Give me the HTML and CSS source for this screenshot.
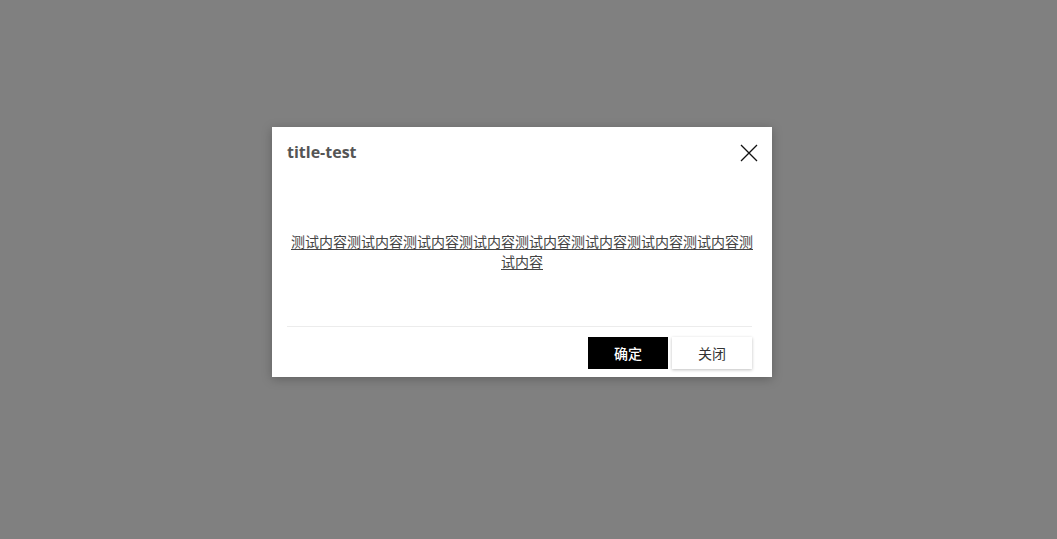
FILE: index.html
```html
<!DOCTYPE html>
<html lang="zh">
<head>
<meta charset="utf-8">
<link rel="stylesheet" href="styles.css">
</head>
<body>
<div class="overlay">
  <div class="dialog">
    <div class="dialog-header">
      <span class="dialog-title">title-test</span>
      <button class="close-btn" aria-label="close">
        <svg width="18" height="18" viewBox="0 0 18 18"><path d="M1 1L17 17M17 1L1 17" stroke="#111" stroke-width="1.3" fill="none"/></svg>
      </button>
    </div>
    <div class="dialog-body">
      <p class="content">测试内容测试内容测试内容测试内容测试内容测试内容测试内容测试内容测试内容</p>
    </div>
    <div class="dialog-footer">
      <button class="btn btn-primary">确定</button>
      <button class="btn btn-default">关闭</button>
    </div>
  </div>
</div>
</body>
</html>
```
FILE: styles.css
```css
html, body {
  margin: 0;
  padding: 0;
  height: 100%;
}
body {
  background: #808080;
  font-family: "Noto Sans", "Noto Sans CJK SC", sans-serif;
}
.overlay {
  position: fixed;
  inset: 0;
  background: #808080;
}
.dialog {
  width: 500px;
  height: 250px;
  margin: 127px 0 0 272px;
  background: #fff;
  box-shadow: 0 2px 10px rgba(0, 0, 0, 0.25);
  display: flex;
  flex-direction: column;
}
.dialog-header {
  height: 50px;
  box-sizing: border-box;
  padding: 0 14px 0 15px;
  display: flex;
  align-items: center;
  justify-content: space-between;
}
.dialog-title {
  font-family: "Open Sans", "Noto Sans", sans-serif;
  font-weight: 700;
  font-size: 16px;
  color: #555;
  margin-top: -1px;
}
.close-btn {
  border: none;
  background: none;
  padding: 0;
  width: 18px;
  height: 18px;
  margin-top: 1px;
  cursor: pointer;
  display: flex;
}
.dialog-body {
  height: 149px;
  padding: 0 15px;
  display: flex;
  align-items: center;
  justify-content: center;
}
.content {
  margin: -2px 0 0;
  font-family: "Noto Sans CJK SC", sans-serif;
  font-size: 14px;
  line-height: 20px;
  color: #444;
  text-align: center;
  text-decoration: underline;
  text-underline-offset: 2px;
}
.dialog-footer {
  margin: 0 20px 0 15px;
  border-top: 1px solid #ececec;
  padding: 10px 0 8px;
  display: flex;
  justify-content: flex-end;
  gap: 4px;
}
.btn {
  width: 80px;
  height: 32px;
  border: none;
  font-family: "Noto Sans CJK SC", sans-serif;
  font-size: 14px;
  cursor: pointer;
}
.btn-primary {
  background: #000;
  color: #fff;
  font-weight: 500;
}
.btn-default {
  background: #fff;
  color: #333;
  box-shadow: 0 1px 3px rgba(0, 0, 0, 0.25);
}
```
